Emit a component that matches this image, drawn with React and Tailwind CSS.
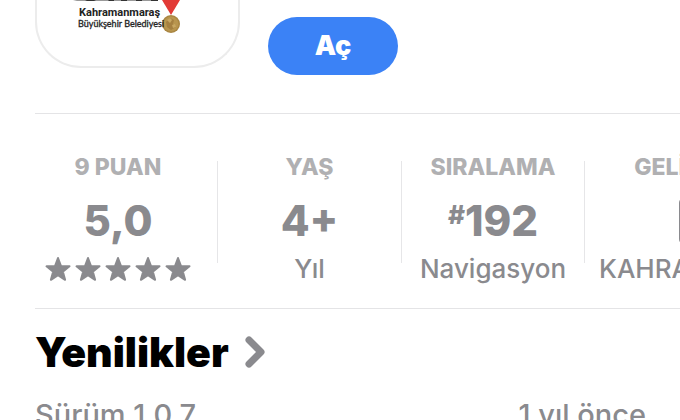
import clsx from "clsx";

const STAR = "M13 2l3 8 8.500.3-6.700 5.300 2.300 8.200-7.100-4.700-7.100 4.700 2.300-8.200L1.500 10.300l8.500-.3z";

function Stars() {
  return (
    <div className="flex gap-1" role="img" aria-label="5,0">
      {[1, 2, 3, 4, 5].map((n) => (
        <svg
          key={n}
          viewBox="0 0 26 26"
          className="size-[26px] fill-[#8a8a8e] stroke-[#8a8a8e]"
          strokeWidth="2"
          strokeLinejoin="round"
        >
          <path d={STAR} />
        </svg>
      ))}
    </div>
  );
}

function Stat({ label, value, className, children }) {
  return (
    <li className={clsx("flex shrink-0 flex-col items-center", className)}>
      <span className="text-[23px] leading-7 font-extrabold text-[#b0b0b2]">{label}</span>
      <div className="mt-5 flex h-10 items-center text-[42px] leading-10 font-extrabold text-[#8a8a8e]">{value}</div>
      <div className="mt-3 flex h-8 items-center text-[26px] leading-8 font-medium text-[#8a8a8e]">{children}</div>
    </li>
  );
}

function Divider() {
  return <li aria-hidden="true" className="mt-2 h-[102px] w-px shrink-0 bg-[#e6e6e8]" />;
}

function Logo() {
  return (
    <svg viewBox="0 0 201 66" className="w-full" role="img" aria-label="Kahramanmaraş Büyükşehir Belediyesi">
      <path d="M40 0h81v1H36z" fill="#999" />
      <path d="M50 0h9l-2 1h-9zM72 0h5v1h-6zM84 0h6v1h-6zM99 0h6v1h-6zM114 0h7v1h-7z" fill="#333" />
      <path d="M125 0h18l-9 15z" fill="#e23a36" />
      <circle cx="134" cy="24" r="9" fill="#a98642" />
      <circle cx="134" cy="24" r="7.500" fill="#b8954e" />
      <path d="M129 22l4-4 4 2-1 4 3 3-5 3-4-3z" fill="#a58040" />
      <path d="M130 20l3-2 2 2-2 3zM135 25l3-1 1 3-3 1z" fill="#c8a762" />
      <text x="42" y="16" fontSize="11" fontWeight="700" fill="#222" fontFamily="Roboto, sans-serif">
        Kahramanmaraş
      </text>
      <text
        x="41"
        y="27"
        fontSize="9"
        fontWeight="400"
        fill="#222"
        stroke="#222"
        strokeWidth="0.3"
        fontFamily="Lato, sans-serif"
      >
        Büyükşehir Belediyesi
      </text>
    </svg>
  );
}

export default function App() {
  return (
    <main className="h-screen overflow-hidden bg-white pl-[35px] font-['Inter',sans-serif]">
      <header className="flex items-start gap-7 border-b border-[#e4e4e6] pb-[38px]">
        <div className="w-[205px] shrink-0 rounded-b-[46px] border-2 border-t-0 border-[#ececec]">
          <Logo />
        </div>
        <button
          type="button"
          className="mt-[17px] h-[58px] w-[130px] rounded-full bg-[#3b82f6] text-[27px] font-black text-white"
        >
          Aç
        </button>
      </header>

      <ul className="flex items-start border-b border-[#e4e4e6] pt-[39px] pb-[23px]">
        <Stat className="w-[182px] pr-4" label="9 PUAN" value="5,0">
          <Stars />
        </Stat>
        <Divider />
        <Stat className="w-[183px]" label="YAŞ" value="4+">
          Yıl
        </Stat>
        <Divider />
        <Stat
          className="w-[182px]"
          label="SIRALAMA"
          value={
            <>
              <span className="self-start text-[26px] leading-7">#</span>192
            </>
          }
        >
          Navigasyon
        </Stat>
        <Divider />
        <Stat
          className="w-[232px]"
          label="GELİŞTİRİCİ"
          value={<span className="h-12 w-11 shrink-0 rounded-md border-4 border-[#8a8a8e]" />}
        >
          <span className="w-[204px] truncate">KAHRAMANMARAŞ</span>
        </Stat>
      </ul>

      <section className="pt-5">
        <h2 className="flex items-center gap-4 text-[41px] leading-[46px] font-black text-black">
          Yenilikler
          <svg
            viewBox="0 0 20 32"
            className="h-8 w-5"
            fill="none"
            stroke="#8a8a8e"
            strokeWidth="7"
            strokeLinecap="round"
            strokeLinejoin="round"
          >
            <path d="M4 4l12 12L4 28" />
          </svg>
        </h2>
        <div className="mt-[22px] flex justify-between pr-[34px] text-[29px] leading-9 font-medium text-[#8a8a8e]">
          <span>Sürüm 1.0.7</span>
          <span>1 yıl önce</span>
        </div>
      </section>
    </main>
  );
}
